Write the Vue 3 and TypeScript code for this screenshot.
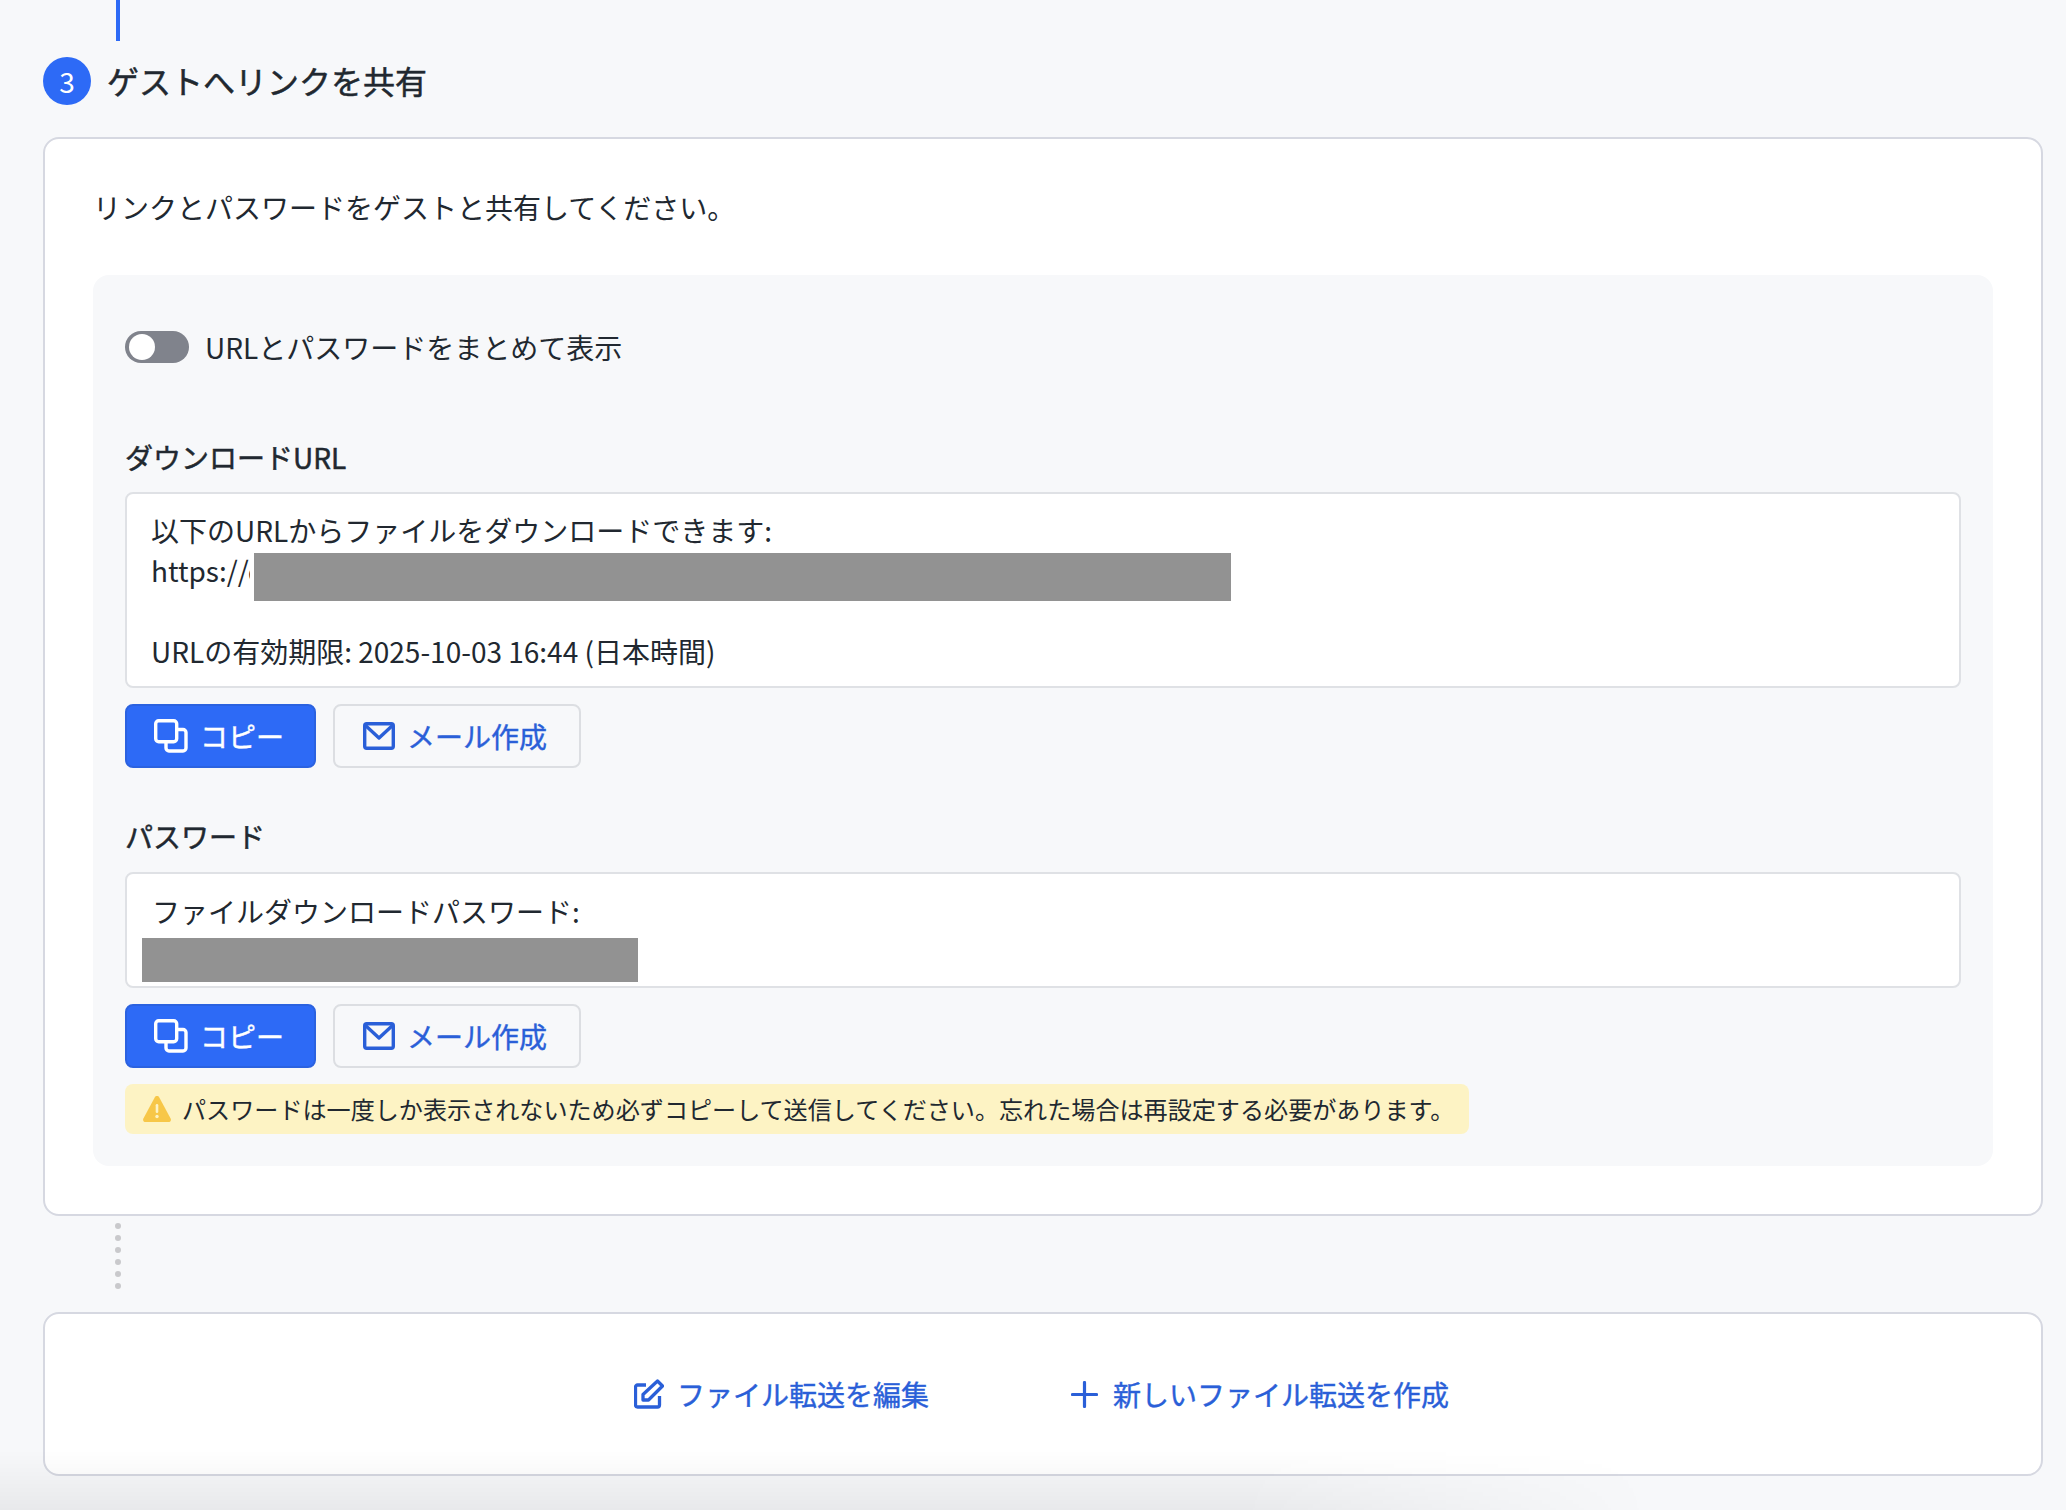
<script setup lang="ts">
const dots = [1, 2, 3, 4, 5, 6];
</script>

<template>
  <div class="page">
    <div class="step-line"></div>

    <div class="step-head">
      <span class="step-num">3</span>
      <h2 class="step-title">ゲストへリンクを共有</h2>
    </div>

    <section class="card">
      <p class="desc">リンクとパスワードをゲストと共有してください。</p>

      <div class="panel">
        <div class="toggle-row">
          <span class="switch"><span class="knob"></span></span>
          <span class="toggle-label">URLとパスワードをまとめて表示</span>
        </div>

        <h3 class="field-label url-label">ダウンロードURL</h3>
        <div class="box box-url">
          <div>以下のURLからファイルをダウンロードできます:</div>
          <div>https://d</div>
          <div class="blank"></div>
          <div>URLの有効期限: 2025-10-03 16:44 (日本時間)</div>
          <span class="mask mask-url"></span>
        </div>
        <div class="actions">
          <button class="btn btn-primary">
            <svg class="icon-copy" viewBox="0 0 34 34" fill="none" stroke="currentColor" stroke-width="3.4" stroke-linejoin="round">
              <rect x="1.7" y="1.7" width="21" height="21" rx="3" />
              <path d="M22.7 10.5H29a3 3 0 0 1 3 3V29a3 3 0 0 1-3 3H15a3 3 0 0 1-3-3v-6.300" />
            </svg>
            コピー
          </button>
          <button class="btn btn-outline">
            <svg class="icon-mail" viewBox="0 0 32 28" fill="none" stroke="currentColor" stroke-width="3.4" stroke-linejoin="round">
              <rect x="1.7" y="1.7" width="28.600" height="24.600" rx="2" />
              <path d="M2 3l14 13L30 3" />
            </svg>
            メール作成
          </button>
        </div>

        <h3 class="field-label pw-label">パスワード</h3>
        <div class="box box-pw">
          <div>ファイルダウンロードパスワード:</div>
          <span class="mask mask-pw"></span>
        </div>
        <div class="actions">
          <button class="btn btn-primary">
            <svg class="icon-copy" viewBox="0 0 34 34" fill="none" stroke="currentColor" stroke-width="3.4" stroke-linejoin="round">
              <rect x="1.7" y="1.7" width="21" height="21" rx="3" />
              <path d="M22.7 10.5H29a3 3 0 0 1 3 3V29a3 3 0 0 1-3 3H15a3 3 0 0 1-3-3v-6.300" />
            </svg>
            コピー
          </button>
          <button class="btn btn-outline">
            <svg class="icon-mail" viewBox="0 0 32 28" fill="none" stroke="currentColor" stroke-width="3.4" stroke-linejoin="round">
              <rect x="1.7" y="1.7" width="28.600" height="24.600" rx="2" />
              <path d="M2 3l14 13L30 3" />
            </svg>
            メール作成
          </button>
        </div>

        <div class="notice">
          <svg class="icon-warn" viewBox="0 0 28 26">
            <path d="M14 0c1 0 1.800.5 2.300 1.400l11.300 21c.9 1.700-.2 3.600-2.200 3.600H2.600C.6 26-.5 24.100.4 22.400l11.300-21C12.200.5 13 0 14 0z" fill="#f7c748" />
            <rect x="12.700" y="8" width="2.600" height="9" rx="1.300" fill="#fdf3c4" />
            <circle cx="14" cy="20.500" r="1.700" fill="#fdf3c4" />
          </svg>
          <span class="notice-text">パスワードは一度しか表示されないため必ずコピーして送信してください。忘れた場合は再設定する必要があります。</span>
        </div>
      </div>
    </section>

    <div class="dots">
      <span v-for="d in dots" :key="d" class="dot"></span>
    </div>

    <section class="card card-links">
      <a class="link">
        <svg class="icon-edit" viewBox="0 0 30 30" fill="none" stroke="currentColor" stroke-width="3.3" stroke-linejoin="round">
          <path d="M12 6H3.500a2 2 0 0 0-2 2v18a2 2 0 0 0 2 2h20a2 2 0 0 0 2-2V17" />
          <path d="M9 21v-5.500L23.500 2l5 5L14.500 21z" />
        </svg>
        ファイル転送を編集
      </a>
      <a class="link link-new">
        <svg class="icon-plus" viewBox="0 0 27 27" fill="none" stroke="currentColor" stroke-width="3.2" stroke-linecap="round">
          <path d="M13.500 1.500v24M1.500 13.500h24" />
        </svg>
        新しいファイル転送を作成
      </a>
    </section>

    <div class="bottom-fade"></div>
  </div>
</template>

<style>
html,
body {
  margin: 0;
  background: #f7f8fa;
}
</style>

<style scoped>
.page {
  position: relative;
  width: 2066px;
  height: 1510px;
  overflow: hidden;
  box-sizing: border-box;
  padding: 0 23px 0 43px;
  background: #f7f8fa;
  color: #212830;
  font-family: "Noto Sans CJK JP", "Noto Sans", sans-serif;
  font-size: 28px;
}

.step-line {
  width: 4px;
  height: 41px;
  margin-left: 72.5px;
  background: #2d6af6;
}

.step-head {
  display: flex;
  align-items: center;
  gap: 16px;
  margin-top: 16px;
  height: 48px;
}

.step-num {
  display: flex;
  align-items: center;
  justify-content: center;
  width: 48px;
  height: 48px;
  border-radius: 50%;
  background: #2d6af6;
  color: #fff;
  font-size: 28px;
  font-weight: 400;
}

.step-title {
  margin: 0 0 2px;
  font-size: 32px;
  font-weight: 400;
  line-height: 46px;
  -webkit-text-stroke: 0.5px #212830;
}

.card {
  box-sizing: border-box;
  width: 2000px;
  margin-top: 32px;
  padding: 48px;
  background: #fff;
  border: 2px solid #d6d8e1;
  border-radius: 16px;
}

.desc {
  margin: 0 0 48px;
  font-size: 28px;
  line-height: 40px;
}

.panel {
  padding: 56px 32px 32px;
  background: #f7f8fa;
  border-radius: 16px;
}

.toggle-row {
  display: flex;
  align-items: center;
  gap: 16px;
  height: 32px;
}

.switch {
  position: relative;
  display: block;
  width: 64px;
  height: 32px;
  border-radius: 16px;
  background: #80838c;
}

.knob {
  position: absolute;
  top: 3px;
  left: 4px;
  width: 26px;
  height: 26px;
  border-radius: 50%;
  background: #fff;
}

.toggle-label {
  font-size: 28px;
  line-height: 40px;
}

.field-label {
  margin: 0;
  font-size: 28px;
  font-weight: 400;
  line-height: 40px;
  -webkit-text-stroke: 0.5px #212830;
}

.url-label {
  margin-top: 74px;
}

.pw-label {
  margin-top: 48px;
}

.box {
  position: relative;
  box-sizing: border-box;
  margin-top: 15px;
  padding: 16px 24px 0;
  background: #fff;
  border: 2px solid #dfe1e5;
  border-radius: 8px;
  font-size: 28px;
  line-height: 40px;
}

.box-url {
  height: 196px;
}

.box-pw {
  height: 116px;
  margin-top: 16px;
  padding: 17px 25px 0;
}

.blank {
  height: 41px;
}

.mask {
  position: absolute;
  background: #929292;
}

.mask-url {
  left: 123px;
  top: 59px;
  width: 977px;
  height: 48px;
  border-left: 4px solid #fff;
}

.mask-pw {
  left: 15px;
  top: 64px;
  width: 496px;
  height: 44px;
}

.actions {
  display: flex;
  gap: 17px;
  margin-top: 16px;
}

.btn {
  display: inline-flex;
  align-items: center;
  box-sizing: border-box;
  height: 64px;
  padding: 0;
  border-radius: 8px;
  font-family: inherit;
  font-size: 28px;
  font-weight: 400;
}

.btn-primary {
  width: 191px;
  gap: 12px;
  padding-left: 27px;
  background: #2d6af6;
  border: 2px solid #2b62e0;
  color: #fff;
  -webkit-text-stroke: 0.4px #fff;
}

.btn-outline {
  width: 248px;
  gap: 12px;
  padding-left: 28px;
  background: transparent;
  border: 2px solid #dcdee2;
  color: #2a5fd8;
  -webkit-text-stroke: 0.4px #2a5fd8;
}

.icon-copy {
  width: 34px;
  height: 34px;
}

.icon-mail {
  width: 32px;
  height: 28px;
}

.notice {
  display: flex;
  align-items: center;
  gap: 11px;
  box-sizing: border-box;
  width: 1344px;
  height: 50px;
  margin-top: 16px;
  padding: 0 0 0 18px;
  background: #fdf3c4;
  border-radius: 8px;
  font-size: 24.1px;
}

.notice-text {
  padding-bottom: 2px;
  white-space: nowrap;
}

.icon-warn {
  width: 28px;
  height: 26px;
}

.dots {
  display: flex;
  flex-direction: column;
  gap: 6px;
  margin: 7px 0 0 72px;
  height: 89px;
}

.dot {
  width: 6px;
  height: 6px;
  border-radius: 50%;
  background: #c9c9cc;
}

.card-links {
  display: flex;
  justify-content: center;
  align-items: center;
  gap: 142px;
  height: 164px;
  margin-top: 0;
  padding: 0 3px 0 0;
}

.link {
  display: inline-flex;
  align-items: center;
  gap: 13px;
  color: #2a5fd8;
  font-size: 28px;
  font-weight: 400;
  -webkit-text-stroke: 0.4px #2a5fd8;
}

.link-new {
  gap: 15px;
}

.icon-edit {
  width: 30px;
  height: 30px;
}

.icon-plus {
  width: 27px;
  height: 27px;
}

/* 画面下の影 */
.bottom-fade {
  position: absolute;
  left: 0;
  right: 0;
  bottom: 0;
  height: 60px;
  background: linear-gradient(to top, rgba(0, 0, 0, 0.06), transparent);
  -webkit-mask-image: linear-gradient(to right, #000 60%, transparent 80%);
  mask-image: linear-gradient(to right, #000 60%, transparent 80%);
  pointer-events: none;
}
</style>
